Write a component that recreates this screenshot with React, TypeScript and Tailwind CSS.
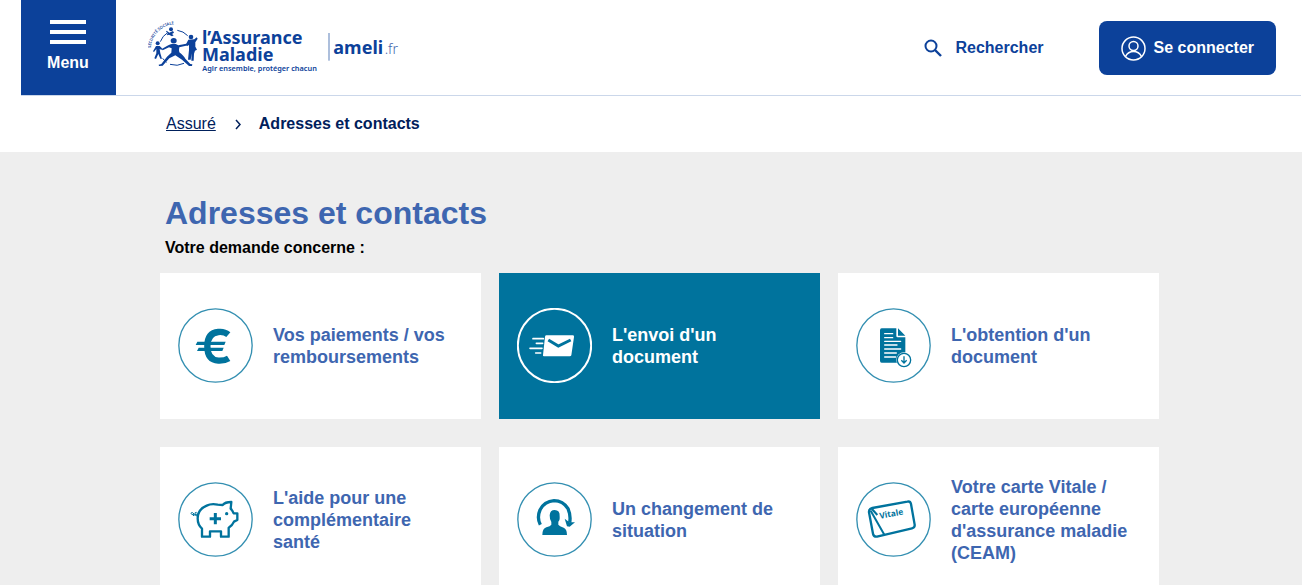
import type { ReactNode } from 'react';

type Topic = {
  title: string;
  icon: ReactNode;
  active?: boolean;
};

function Logo() {
  return (
    <svg
      viewBox="24 24 756 174"
      className="h-[58px] w-[252px] fill-[#0c419a] font-['Noto_Sans',sans-serif]"
      role="img"
      aria-label="l'Assurance Maladie, ameli.fr"
    >
      <defs>
        <path id="arc" d="M32 114 A78 78 0 0 1 122 43" />
      </defs>
      <text fontSize="12" fontWeight="600">
        <textPath href="#arc">SÉCURITÉ SOCIALE</textPath>
      </text>
      <g fill="none" stroke="#0c419a" strokeWidth="3">
        <path d="M61 95 A52 52 0 0 1 83 68 M112 61 A52 52 0 0 1 143 77" />
        <path d="M68 145 Q74 153 80 157 M90 163 Q112 170 132 160" />
      </g>
      {/* runner */}
      <ellipse cx="101" cy="92" rx="9" ry="8" />
      <path d="M92 103 Q103 99 115 106 L147 100 L148 105 L118 112 Q116 120 118 127 Q132 138 136 146 L151 162 L157 163 L156 168 L147 168 L126 149 L106 136 L88 145 L68 167 L57 168 L56 164 L64 162 L81 140 L94 128 L95 115 L87 112 L68 121 L65 117 L85 106 Z" />
      {/* child on the left */}
      <circle cx="53" cy="100" r="6" />
      <path d="M48 108 L59 108 L66 115 L65 120 L59 117 L61 130 L66 146 L61 146 L55 132 L48 147 L43 145 L49 130 L49 117 L42 126 L39 124 Z" />
      {/* baby at the top */}
      <circle cx="93" cy="58" r="6" />
      <path d="M80 62 L88 68 L99 63 L102 68 L96 72 L101 76 L96 79 L87 74 L82 76 L81 72 L84 70 L78 65 Z" />
      {/* adult on the right */}
      <circle cx="153" cy="81" r="7" />
      <path d="M145 89 L163 88 L170 82 L173 86 L166 97 L166 110 L171 119 L165 122 L162 131 L161 152 L154 152 L155 130 L152 149 L144 149 L147 120 L147 104 L141 108 L138 103 Z" />
      <text fontSize="54" fontWeight="700">
        <tspan x="186" y="101">
          l’Assurance
        </tspan>
        <tspan x="186" y="152">
          Maladie
        </tspan>
      </text>
      <text x="187" y="182" fontSize="22" fontWeight="600">
        Agir ensemble, protéger chacun
      </text>
      <rect x="565" y="69" width="4" height="83" opacity="0.5" />
      <text x="580" y="133" fontSize="54" fontWeight="700">
        ameli
      </text>
      <text x="734" y="133" fontSize="42" fontWeight="300" opacity="0.8">
        .fr
      </text>
    </svg>
  );
}

function EuroIcon() {
  return (
    <g>
      <path
        d="M175 103 Q163 93 145 95 Q112 98 112 138 Q112 179 145 181 Q163 182 176 174"
        fill="none"
        stroke="currentColor"
        strokeWidth="19"
      />
      <path d="M82 124 H167 L163 134 H77 Z M86 142 H161 L157 152 H81 Z" fill="currentColor" />
    </g>
  );
}

function MailIcon() {
  return (
    <g>
      <path d="M112 105 H192 Q196 105 195 110 L187 165 Q186 168 182 168 H105 Q101 168 102 164 L108 109 Q109 105 112 105 Z" fill="currentColor" />
      <path d="M118 119 L148 137 L185 119" fill="none" stroke="#00739d" strokeWidth="9" />
      <path d="M72 115 H103 M82 129 H101 M63 144 H99 M80 158 H95" stroke="currentColor" strokeWidth="5" strokeLinecap="round" />
    </g>
  );
}

function DocumentIcon() {
  return (
    <g>
      <path d="M101 84 H145 V107 Q145 111 149 111 H172 V181 Q172 187 166 187 H101 Q96 187 96 181 V90 Q96 84 101 84 Z M150 84 L172 106 H150 Z" fill="currentColor" />
      <path d="M110 100 H134 M110 112 H134 M110 123 H158 M110 134 H147 M110 146 H158 M110 158 H145 M110 170 H143" stroke="white" strokeWidth="4" strokeLinecap="round" />
      <circle cx="168" cy="179" r="23" fill="white" />
      <circle cx="168" cy="179" r="20" fill="white" stroke="currentColor" strokeWidth="4" />
      <path d="M168 168 V188 M160 180 L168 188 L176 180" fill="none" stroke="currentColor" strokeWidth="4" />
    </g>
  );
}

function PiggyIcon() {
  return (
    <g fill="none" stroke="currentColor" strokeWidth="7" strokeLinejoin="round">
      <path d="M110 94 Q124 87 143 91 L158 92 Q165 83 184 83 L182 103 Q188 109 191 117 H202 V137 L192 142 Q187 154 176 160 V187 H153 V171 H120 V187 H96 V163 Q83 152 83 132 Q83 105 110 94 Z" />
      <path d="M136 116 V150 M119 133 H153" strokeWidth="9" />
      <path d="M82 119 Q71 125 65 120 Q60 114 68 115 Q75 118 70 125 M80 114 Q73 113 75 121 Q80 129 82 121" strokeWidth="3" />
      <circle cx="170" cy="118" r="5" fill="currentColor" stroke="none" />
    </g>
  );
}

function SituationIcon() {
  return (
    <g>
      <path d="M94 151 Q83 130 93 107 Q106 81 135 79 Q162 79 177 103 Q186 124 182 145" fill="none" stroke="currentColor" strokeWidth="10" />
      <path d="M167 133 L181 144 L198 144 L182 157 L174 156 Z" fill="currentColor" />
      <path d="M137 107 Q153 107 152 126 Q153 139 148 142 V151 Q151 156 164 160 Q174 164 174 182 H100 Q100 163 112 159 Q124 156 127 151 V143 Q122 137 122 123 Q123 107 137 107 Z" fill="currentColor" />
    </g>
  );
}

function VitaleIcon() {
  return (
    <g fill="none" stroke="currentColor" strokeWidth="7" strokeLinejoin="round">
      <path d="M73 101 L178 82 Q187 80 189 89 L200 151 Q201 160 192 162 L87 187 Q77 188 75 178 L63 114 Q62 104 73 101 Z" />
      <path d="M68 109 L109 181 M72 104 L88 122" strokeWidth="6" />
      <text
        x="96"
        y="133"
        transform="rotate(-10 96 133)"
        fontSize="25"
        fontWeight="700"
        fill="currentColor"
        stroke="none"
        className="font-['Noto_Sans',sans-serif]"
      >
        Vitale
      </text>
    </g>
  );
}

const topics: Topic[] = [
  { title: 'Vos paiements / vos remboursements', icon: <EuroIcon /> },
  { title: "L'envoi d'un document", icon: <MailIcon />, active: true },
  { title: "L'obtention d'un document", icon: <DocumentIcon /> },
  { title: "L'aide pour une complémentaire santé", icon: <PiggyIcon /> },
  { title: 'Un changement de situation', icon: <SituationIcon /> },
  {
    title: "Votre carte Vitale / carte européenne d'assurance maladie (CEAM)",
    icon: <VitaleIcon />,
  },
];

function TopicCard({ title, icon, active }: Topic) {
  return (
    <a
      href="#"
      className={`flex min-h-[146px] items-center gap-5 px-[18px] pt-4 pb-[17px] ${
        active ? 'bg-[#00739d] text-white' : 'bg-white text-[#3e66b0]'
      }`}
    >
      <svg
        viewBox="24 23 225 225"
        aria-hidden="true"
        className={`size-[75px] shrink-0 ${active ? 'text-white' : 'text-[#00739d]'}`}
      >
        <circle
          cx="136.5"
          cy="135.5"
          r="110"
          fill="none"
          stroke="currentColor"
          strokeWidth={active ? 6 : 4}
          opacity={active ? 1 : 0.8}
        />
        {icon}
      </svg>
      <span className="max-w-[184px] text-lg leading-[22px] font-bold">{title}</span>
    </a>
  );
}

export default function App() {
  return (
    <div className="flex min-h-screen flex-col bg-white font-['Liberation_Sans',Arial,sans-serif]">
      <header className="mr-px ml-[21px] flex h-24 items-start border-b border-[#cbd7ea]">
        <button
          type="button"
          className="flex h-[95px] w-[95px] flex-col items-center bg-[#0c419a] pt-5 pr-px font-bold text-white"
        >
          <span className="flex w-9 flex-col gap-1.5">
            <span className="h-1 bg-white" />
            <span className="h-1 bg-white" />
            <span className="h-1 bg-white" />
          </span>
          <span className="mt-[7px]">Menu</span>
        </button>
        <a href="#" className="mt-[18px] ml-8">
          <Logo />
        </a>
        <div className="mt-[21px] mr-[25px] ml-auto flex items-center gap-[55px] font-bold">
          <button type="button" className="flex items-center gap-3 text-[#0c419a]">
            <svg viewBox="0 0 20 20" className="size-5" fill="none" stroke="currentColor" aria-hidden="true">
              <circle cx="8" cy="8" r="5.5" strokeWidth="2" />
              <path d="M12 12 L18 18" strokeWidth="2.4" />
            </svg>
            Rechercher
          </button>
          <button
            type="button"
            className="flex h-[54px] items-center gap-2 rounded-lg bg-[#0c419a] px-[22px] text-white"
          >
            <svg viewBox="0 0 25 25" className="size-[25px]" fill="none" stroke="currentColor" strokeWidth="1.5" aria-hidden="true">
              <circle cx="12.5" cy="12.5" r="11.5" />
              <circle cx="12.5" cy="10" r="4.5" />
              <path d="M4.5 20.5 Q7 15.5 12.5 15.5 Q18 15.5 20.5 20.5" />
            </svg>
            Se connecter
          </button>
        </div>
      </header>

      <nav aria-label="Fil d'Ariane" className="mx-auto flex h-14 w-full max-w-[1016px] items-center pl-[23px] text-[#00205b]">
        <a href="#" className="underline">
          Assuré
        </a>
        <svg viewBox="0 0 8 12" className="mr-[17px] ml-[18px] h-3 w-2" fill="none" stroke="currentColor" strokeWidth="1.5" aria-hidden="true">
          <path d="M2 2 L6 6.5 L2 11" />
        </svg>
        <span className="font-bold">Adresses et contacts</span>
      </nav>

      <main className="grow bg-[#eee] pb-10">
        <div className="mx-auto max-w-[1016px] pt-10 pl-[17px]">
          <div className="pl-[5px]">
            <h1 className="text-[32px] leading-[42px] font-bold text-[#3e66b0]">Adresses et contacts</h1>
            <p className="pt-0.5 font-bold text-black">Votre demande concerne :</p>
          </div>
          <div className="mt-[13px] grid grid-cols-3 gap-x-[18px] gap-y-7">
            {topics.map((topic) => (
              <TopicCard key={topic.title} {...topic} />
            ))}
          </div>
        </div>
      </main>
    </div>
  );
}
